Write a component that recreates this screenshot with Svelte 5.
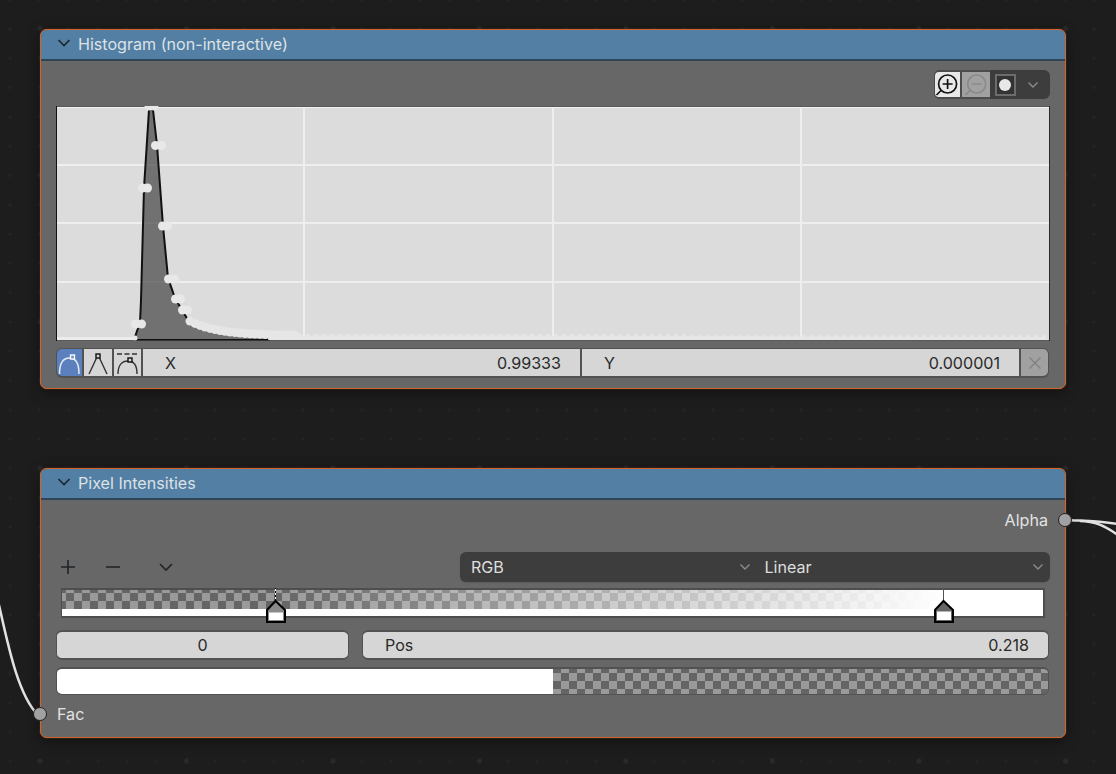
<script>
  const grid = { v: [303, 552, 800], h: [164, 222, 281] };
  const curve = [[134,340],[137,331],[140,323],[141,300],[144,188],[149,110],[151,108],[153,110],[157,145],[163,226],[168,278],[175,298],[182,310],[188,320],[200,326],[215,330],[240,334],[270,337],[290,339]];
  const curveStr = curve.map((p) => p.join(',')).join(' ');
  const fillStr = curveStr + ' 290,340 134,340';
  const blobs = [[149,106],[154,106],[155.5,145.5],[161.5,145.5],[142.5,188],[147.5,188],[162.5,226],[167.500,226],[168.5,279],[174.5,279],[175.5,299],[180.5,299],[182.5,310],[187.5,310],[135.5,324],[141.5,324]];
  const centre = (x) => 335.5 - 15.5 * Math.exp(-(x - 188) / 28);
  const near = [];
  for (let x = 190; x < 300; x += 5) near.push([x, centre(x)]);
  const far = [];
  for (let x = 300; x < 1049; x += 8) {
    far.push([x, 335.5 + Math.min(Math.max(x - 500, 0) / 300, 1.5)]);
  }
  const strip = '268,340 ' + near.filter((n) => n[0] >= 268).map((n) => `${n[0]},${n[1]}`).join(' ') + ' ' + far.map((f) => `${f[0]},${f[1]}`).join(' ') + ' 1049,340';
</script>

<div class="canvas">
  <svg class="wires" viewBox="0 0 1116 774" aria-hidden="true">
    <path d="M-1 605 C8 645 18 695 38 715" />
    <path d="M1066 520 C1085 521 1100 521 1118 524" />
    <path d="M1080 521 C1095 521 1105 526 1118 535" />
  </svg>

  <section class="node histogram">
    <header class="head">
      <svg class="chev" viewBox="0 0 14 10"><path d="M1.5 2 L7 7.5 L12.5 2" /></svg>
      <span>Histogram (non-interactive)</span>
    </header>
    <div class="body">
      <div class="tools">
        <div class="toolgroup">
          <button class="tool on" aria-label="zoom in">
            <svg viewBox="0 0 25 25"><circle cx="12.6" cy="12" r="9" /><path d="M12.6 7v10M7.6 12h10M6 18.500L1.500 23" /></svg>
          </button>
          <button class="tool off" aria-label="zoom out">
            <svg viewBox="0 0 28 25"><circle cx="14.700" cy="12" r="9" /><path d="M9.700 12h10M8 18.500L3.500 23" /></svg>
          </button>
          <button class="tool dark" aria-label="channel">
            <span class="square"><span class="dot"></span></span>
          </button>
          <button class="tool more" aria-label="more">
            <svg viewBox="0 0 12 8"><path d="M1.5 1.5L6 6L10.5 1.5" /></svg>
          </button>
        </div>
      </div>

      <div class="plot">
        <svg viewBox="56 106 994 235">
          <rect x="56" y="106" width="994" height="235" fill="#5a5a5a" />
          <rect x="57" y="107" width="992" height="233" fill="#dcdcdc" />
          <rect x="57" y="107" width="992" height="1" fill="#f2f2f2" />
          {#each grid.v as x}<rect {x} y="107" width="2" height="232" fill="#eeeeee" />{/each}
          {#each grid.h as y}<rect x="57" {y} width="992" height="2" fill="#eeeeee" />{/each}
          <polygon points={fillStr} fill="#4c4c4c" opacity="0.74" />
          <polyline points={curveStr} fill="none" stroke="#111" stroke-width="2" />
          <rect x="134" y="339" width="136" height="1.5" fill="#111" />
          <rect x="56" y="106" width="1" height="235" fill="#111" />
          <rect x="1049" y="106" width="1" height="235" fill="#2a2a2a" />
          <rect x="57" y="337" width="78" height="3" fill="#ececec" />
          <polygon points={strip} fill="#e6e6e6" />
          {#each near as n}<circle cx={n[0]} cy={n[1]} r="4.5" fill="#e6e6e6" />{/each}
          {#each far as f}<circle cx={f[0]} cy={f[1]} r="2" fill="#e6e6e6" />{/each}
          {#each blobs as b}<circle cx={b[0]} cy={b[1]} r="4.5" fill="#e8e8e8" />{/each}
          <circle cx="135" cy="338" r="2.5" fill="#e8e8e8" />
        </svg>
      </div>

      <div class="curve-row">
        <button class="hbtn blue" aria-label="auto">
          <svg viewBox="0 0 25 26"><path d="M2.500 24C2.500 14 6 8 12.500 8C19 8 22 14 22 24" class="light" /><rect x="13.500" y="5" width="4" height="4" class="lightbox" /></svg>
        </button>
        <button class="hbtn wide" aria-label="vector">
          <svg viewBox="0 0 28 26"><path d="M13 7L5 24M15 7L23 24" class="darkline" /><rect x="12" y="4" width="4" height="4" class="darkbox" /></svg>
        </button>
        <button class="hbtn wide third" aria-label="extend">
          <svg viewBox="0 0 27 26"><path d="M3 4H8M10.500 4H15.500M18 4H23" class="darkline" /><path d="M4 24C4 15 8 11 14 11C20 11 23 15 23 24" class="darkline" /><rect x="14" y="8" width="4" height="4" class="darkbox" /></svg>
        </button>
        <div class="field coord"><span class="lab">X</span><span class="val">0.99333</span></div>
        <div class="field coord"><span class="lab">Y</span><span class="val">0.000001</span></div>
        <button class="hbtn del" aria-label="delete">
          <svg viewBox="0 0 14 14"><path d="M1.500 1.500L12.500 12.500M12.500 1.500L1.500 12.500" /></svg>
        </button>
      </div>
    </div>
  </section>

  <section class="node intensities">
    <header class="head">
      <svg class="chev" viewBox="0 0 14 10"><path d="M1.5 2 L7 7.5 L12.5 2" /></svg>
      <span>Pixel Intensities</span>
    </header>
    <div class="body">
      <div class="output"><span>Alpha</span></div>
      <div class="ramp-tools">
        <div class="glyphs">
          <svg class="g plus" viewBox="0 0 14 14"><path d="M7 0V14M0 7H14" /></svg>
          <svg class="g minus" viewBox="0 0 14 14"><path d="M0 7H14" /></svg>
          <svg class="g vee" viewBox="0 0 14 10"><path d="M1 2L7 8L13 2" /></svg>
        </div>
        <div class="selects">
          <div class="select">RGB<svg viewBox="0 0 12 8"><path d="M1.500 1.500L6 6L10.500 1.500" /></svg></div>
          <div class="select second">Linear<svg viewBox="0 0 12 8"><path d="M1.500 1.500L6 6L10.500 1.500" /></svg></div>
        </div>
      </div>
      <div class="ramp">
        <div class="ramp-inner">
          <div class="ramp-checker"></div>
          <div class="ramp-solid"></div>
        </div>
        <svg class="handle h1" viewBox="0 0 20 36">
          <path class="tick" d="M9.500 0V14" />
          <path class="tick white" d="M9.500 1V14" />
          <path class="house" d="M1 34V22L9.500 13L19 22V34Z" />
          <rect x="3" y="24.500" width="14" height="7.500" fill="#fff" />
        </svg>
        <svg class="handle h2" viewBox="0 0 20 36">
          <path class="tick thin" d="M9.500 0V14" />
          <path class="house dark" d="M1 34V22L9.500 13L19 22V34Z" />
          <rect x="3" y="23.500" width="14" height="8.500" fill="#fff" />
        </svg>
      </div>
      <div class="index-row">
        <div class="field index"><span>0</span></div>
        <div class="field pos"><span class="lab">Pos</span><span class="val">0.218</span></div>
      </div>
      <div class="alpha-bar">
        <div class="alpha-fill"></div>
        <div class="alpha-check"></div>
      </div>
      <div class="input"><span>Fac</span></div>
    </div>
    <span class="socket out"></span>
    <span class="socket in"></span>
  </section>
</div>

<style>
  :global(body) {
    margin: 0;
    background: #1d1d1d;
  }
  .canvas {
    position: relative;
    width: 1116px;
    height: 774px;
    overflow: hidden;
    font-family: Inter, "Liberation Sans", sans-serif;
    background-color: #1d1d1d;
    background-image:
      radial-gradient(circle at center, #2a2a2a 0, #2a2a2a 2px, transparent 3px),
      radial-gradient(circle at center, #252525 0, #252525 1px, transparent 2px);
    background-size: 146.5px 146.5px, 29.3px 29.3px;
    background-position: -33.25px -44.75px, -4.65px 14.35px;
  }
  .wires {
    position: absolute;
    inset: 0;
    width: 1116px;
    height: 774px;
  }
  .wires path {
    fill: none;
    stroke: #e2e2e2;
    stroke-width: 2.5;
  }
  .node {
    position: absolute;
    left: 40px;
    width: 1026px;
    box-sizing: border-box;
    background: #676767;
    border: 1px solid #d0642b;
    border-radius: 7px;
    box-shadow: 0 0 1px #d0642b, 0 3px 14px rgba(0, 0, 0, 0.45);
  }
  .histogram {
    top: 29px;
    height: 360px;
  }
  .intensities {
    top: 468px;
    height: 270px;
  }
  .head {
    display: flex;
    align-items: center;
    height: 31px;
    box-sizing: border-box;
    padding-left: 16px;
    gap: 7px;
    background: #527fa3;
    border-bottom: 2px solid #2c4557;
    border-radius: 6px 6px 0 0;
    color: #dde2e6;
    font-size: 16.1px;
  }
  .head span {
    transform: translateY(-1px);
  }
  .chev {
    width: 14px;
    height: 10px;
    transform: translateY(-2px);
  }
  .chev path,
  .g path {
    fill: none;
    stroke: #1f2528;
    stroke-width: 1.6;
  }
  .body {
    padding: 0 15px;
  }
  button {
    border: 0;
    padding: 0;
    display: flex;
    align-items: center;
    justify-content: center;
  }
  .tools {
    display: flex;
    justify-content: flex-end;
    padding-top: 9px;
  }
  .toolgroup {
    display: flex;
    align-items: center;
    height: 29px;
    width: 116px;
    background: #3d3d3d;
    border-radius: 6px;
    overflow: hidden;
  }
  .tool {
    height: 100%;
    background: transparent;
  }
  .tool.on {
    width: 28px;
    background: #4d4d4d;
    padding: 2px 2px 2px 1px;
    box-sizing: border-box;
  }
  .tool.on svg {
    width: 25px;
    height: 25px;
    background: #e8e8e8;
    border-radius: 4px 0 0 4px;
  }
  .tool.on circle,
  .tool.on path {
    fill: none;
    stroke: #111;
    stroke-width: 1.7;
  }
  .tool.off {
    width: 28px;
    background: #4d4d4d;
    padding: 2px 0;
    box-sizing: border-box;
  }
  .tool.off svg {
    width: 28px;
    height: 25px;
    background: #a1a1a1;
  }
  .tool.off circle,
  .tool.off path {
    fill: none;
    stroke: #8a8a8a;
    stroke-width: 1.7;
  }
  .tool.dark {
    width: 30px;
  }
  .square {
    display: flex;
    align-items: center;
    justify-content: center;
    width: 17px;
    height: 18px;
    border: 2px solid #6c6c6c;
    background: #333;
  }
  .dot {
    width: 12px;
    height: 12px;
    border-radius: 50%;
    background: #e8e8e8;
  }
  .tool.more {
    width: 30px;
    padding-right: 4px;
    box-sizing: border-box;
  }
  .tool.more svg,
  .select svg {
    width: 12px;
    height: 8px;
  }
  .tool.more path,
  .select path {
    fill: none;
    stroke: #8c8c8c;
    stroke-width: 1.4;
  }
  .plot {
    margin-top: 7px;
    height: 235px;
  }
  .plot svg {
    display: block;
    width: 994px;
    height: 235px;
  }
  .curve-row {
    display: flex;
    gap: 2px;
    margin-top: 7px;
    width: 993px;
    box-sizing: border-box;
    height: 30px;
    padding: 1px 1px 2px 1px;
    background: #525252;
    border-radius: 6px;
  }
  .hbtn {
    background: #d6d6d6;
    flex: none;
  }
  .hbtn svg {
    display: block;
  }
  .hbtn.blue {
    width: 25px;
    background: #5b80bd;
    border-radius: 5px 0 0 5px;
  }
  .hbtn.blue svg {
    width: 25px;
    height: 26px;
  }
  .light {
    fill: none;
    stroke: #e4e9f2;
    stroke-width: 1.5;
  }
  .lightbox {
    fill: #6f8fc6;
    stroke: #fff;
    stroke-width: 1.3;
  }
  .hbtn.wide {
    width: 28px;
  }
  .hbtn.wide svg {
    width: 28px;
    height: 26px;
  }
  .hbtn.wide.third {
    width: 27px;
  }
  .hbtn.wide.third svg {
    width: 27px;
  }
  .darkline {
    fill: none;
    stroke: #333;
    stroke-width: 1.4;
  }
  .darkbox {
    fill: #d6d6d6;
    stroke: #111;
    stroke-width: 1.4;
  }
  .field {
    display: flex;
    align-items: center;
    justify-content: space-between;
    background: #d6d6d6;
    color: #2a2a2a;
    font-size: 16.1px;
    box-sizing: border-box;
  }
  .coord {
    flex: 1;
    padding: 0 19px 0 22px;
  }
  .hbtn.del {
    width: 27px;
    background: #a1a1a1;
    border-radius: 0 5px 5px 0;
  }
  .hbtn.del svg {
    width: 14px;
    height: 14px;
  }
  .del path {
    fill: none;
    stroke: #818181;
    stroke-width: 1.4;
  }
  .output {
    display: flex;
    justify-content: flex-end;
    align-items: center;
    height: 22px;
    margin-top: 9px;
    color: #e2e2e2;
    font-size: 16.1px;
    margin-right: 2px;
  }
  .ramp-tools {
    display: flex;
    justify-content: space-between;
    align-items: center;
    height: 30px;
    margin-top: 21px;
  }
  .glyphs {
    display: flex;
    align-items: center;
    padding-left: 5px;
  }
  .g {
    display: block;
  }
  .plus,
  .minus {
    width: 14px;
    height: 14px;
  }
  .minus {
    margin-left: 31px;
  }
  .vee {
    width: 14px;
    height: 10px;
    margin-left: 39px;
  }
  .selects {
    display: flex;
    width: 590px;
    height: 30px;
    background: #3d3d3d;
    border-radius: 6px;
    box-shadow: 0 1px 1px rgba(0, 0, 0, 0.12);
  }
  .select {
    flex: 1;
    display: flex;
    align-items: center;
    justify-content: space-between;
    padding: 0 5px 0 11px;
    color: #dedede;
    font-size: 16.1px;
  }
  .select.second {
    padding-left: 9px;
    padding-right: 6px;
  }
  .ramp {
    position: relative;
    margin: 6px 0 0 5px;
    height: 30px;
    box-sizing: border-box;
    width: 984px;
    background: #4e4e4e;
    padding: 2px 2px 2px 1px;
  }
  .ramp-inner {
    display: flex;
    flex-direction: column;
    height: 26px;
  }
  .ramp-checker {
    height: 19px;
    background-image:
      linear-gradient(90deg, transparent 0, transparent 21.7%, #fff 89.9%),
      conic-gradient(#9a9a9a 25%, #656565 0 50%, #9a9a9a 0 75%, #656565 0);
    background-size: 100% 100%, 16px 16px;
    background-position: 0 0, -4px -5px;
  }
  .ramp-solid {
    height: 7px;
    background: #fff;
  }
  .handle {
    position: absolute;
    top: 0;
    width: 20px;
    height: 36px;
    overflow: visible;
  }
  .h1 {
    left: 205px;
  }
  .h2 {
    left: 873px;
  }
  .tick {
    stroke: #000;
    stroke-width: 1;
    fill: none;
  }
  .tick.white {
    stroke: #fff;
    stroke-dasharray: 2 2;
  }
  .tick.thin {
    stroke: #555;
  }
  .house {
    fill: #8a8a8a;
    stroke: #000;
    stroke-width: 2;
  }
  .house.dark {
    fill: #666;
  }
  .index-row {
    display: flex;
    gap: 13px;
    margin-top: 12px;
    width: 993px;
    height: 30px;
  }
  .index-row .field {
    border: 2px solid #525252;
    border-width: 2px 1px 2px 1px;
    border-radius: 6px;
  }
  .index {
    width: 293px;
    justify-content: center;
  }
  .pos {
    flex: 1;
    padding: 0 19px 0 22px;
  }
  .alpha-bar {
    display: flex;
    margin-top: 7px;
    width: 993px;
    height: 28px;
    box-sizing: border-box;
    border: 2px solid #525252;
    border-width: 2px 1px 1px 1px;
    border-radius: 6px;
    overflow: hidden;
  }
  .alpha-fill {
    width: 496px;
    background: #fff;
  }
  .alpha-check {
    flex: 1;
    background-image: conic-gradient(#9a9a9a 25%, #656565 0 50%, #9a9a9a 0 75%, #656565 0);
    background-size: 16px 16px;
    background-position: 0 -4px;
  }
  .input {
    display: flex;
    align-items: center;
    height: 22px;
    margin-top: 8px;
    padding-left: 1px;
    color: #e2e2e2;
    font-size: 16.1px;
  }
  .socket {
    position: absolute;
    width: 14px;
    height: 14px;
    box-sizing: border-box;
    border-radius: 50%;
    background: #a1a1a1;
    border: 1.5px solid #222;
  }
  .socket.out {
    right: -7px;
    top: 44px;
  }
  .socket.in {
    left: -8px;
    top: 238px;
  }
</style>
